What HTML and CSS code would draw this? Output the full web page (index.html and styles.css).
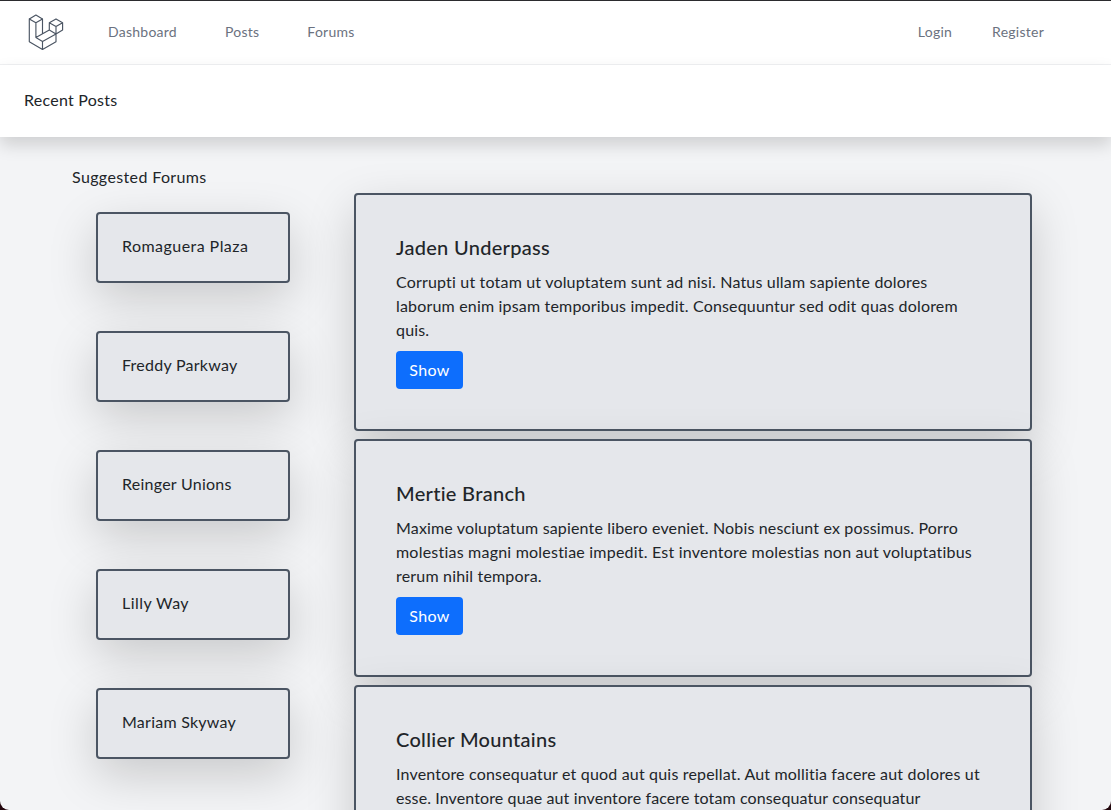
FILE: index.html
```html
<!DOCTYPE html>
<html lang="en">
<head>
<meta charset="utf-8">
<title>Recent Posts</title>
<link rel="stylesheet" href="styles.css">
</head>
<body>
<div class="window">
  <nav class="navbar">
    <a class="logo" href="#" aria-label="Home">
      <svg width="36" height="37" viewBox="0 0 36 37" fill="none" stroke="#4b5563" stroke-width="1.15" stroke-linejoin="round" stroke-linecap="round">
        <path d="M1.3 4.9 7.9 1 14.5 4.9 7.9 8.7ZM1.3 4.9V27.8L14.5 35.4 28 27.8V19.9M7.9 8.7V23.5L14.5 27.4V35.4M14.5 4.9V19.7M7.9 23.5 21.3 15.9M14.5 27.4 28 19.9M28 4.9 34.6 8.7 28 12.5 21.3 8.7ZM21.3 8.7V15.9L28 19.9 34.6 16V8.7M28 12.5V19.9"/>
      </svg>
    </a>
    <div class="links">
      <a href="#">Dashboard</a>
      <a href="#">Posts</a>
      <a href="#">Forums</a>
    </div>
    <div class="auth">
      <a href="#">Login</a>
      <a href="#">Register</a>
    </div>
  </nav>
  <header class="heading">Recent Posts</header>
  <main class="content">
    <aside class="suggested">
      <h2 class="suggested-title">Suggested Forums</h2>
      <div class="forum wide">Romaguera Plaza</div>
      <div class="forum">Freddy Parkway</div>
      <div class="forum">Reinger Unions</div>
      <div class="forum wide">Lilly Way</div>
      <div class="forum">Mariam Skyway</div>
    </aside>
    <section class="posts">
      <article class="post">
        <h3 class="post-title">Jaden Underpass</h3>
        <p class="post-text">Corrupti ut totam ut voluptatem sunt ad nisi. Natus ullam sapiente dolores<br>laborum enim ipsam temporibus impedit. Consequuntur sed odit quas dolorem<br>quis.</p>
        <a class="btn" href="#">Show</a>
      </article>
      <article class="post">
        <h3 class="post-title">Mertie Branch</h3>
        <p class="post-text"><span class="snug">Maxime voluptatum sapiente libero eveniet. Nobis nesciunt ex possimus. Porro</span><br><span class="loose">molestias magni molestiae impedit. Est inventore molestias non aut voluptatibus</span><br>rerum nihil tempora.</p>
        <a class="btn" href="#">Show</a>
      </article>
      <article class="post">
        <h3 class="post-title">Collier Mountains</h3>
        <p class="post-text">Inventore consequatur et quod aut quis repellat. Aut mollitia facere aut dolores ut<br><span class="tight">esse. Inventore quae aut inventore facere totam consequatur consequatur</span></p>
      </article>
    </section>
  </main>
</div>
</body>
</html>
```

FILE: styles.css
```css
* { box-sizing: border-box; }
html { background: #22060c; }
body {
  margin: 0;
  height: 810px;
  overflow: hidden;
  font-family: Lato, sans-serif;
  font-size: 16px;
  line-height: 24px;
  letter-spacing: 0.25px;
  color: #212529;
}
a { text-decoration: none; color: inherit; }
.window {
  height: 810px;
  overflow: hidden;
  background: #f3f4f6;
  border-top: 1px solid #2b2b2e;
  border-radius: 0 0 9px 9px;
}
.navbar {
  display: flex;
  align-items: center;
  height: 64px;
  padding: 0 67px 0 28px;
  background: #fff;
  border-bottom: 1px solid #f0f1f3;
  font-size: 14px;
  color: #6b7280;
}
.logo { display: flex; }
.links { display: flex; gap: 48px; margin-left: 44px; padding-bottom: 1px; }
.auth { display: flex; gap: 40px; margin-left: auto; padding-bottom: 1px; }
.heading {
  height: 72px;
  padding: 23px 24px;
  background: #fff;
  box-shadow: 0 8px 16px rgba(0, 0, 0, 0.15);
}
.content { display: flex; align-items: flex-start; }
.suggested { width: 290px; padding: 28px 0 0 72px; }
.suggested-title {
  margin: 0 0 23px;
  font-size: 16px;
  font-weight: 400;
  line-height: 24px;
  letter-spacing: 0.37px;
}
.forum {
  height: 71px;
  margin: 0 0 48px 24px;
  padding: 20px 24px;
  background: #e5e7eb;
  border: 2px solid #4b5563;
  border-radius: 4px;
  box-shadow: 0 16px 48px rgba(0, 0, 0, 0.175);
}
.wide { letter-spacing: 0.45px; }
.posts {
  display: flex;
  flex-direction: column;
  gap: 8px;
  width: 678px;
  margin: 56px 0 0 64px;
}
.post {
  height: 238px;
  padding: 39px 40px;
  background: #e5e7eb;
  border: 2px solid #4b5563;
  border-radius: 4px;
  box-shadow: 0 16px 48px rgba(0, 0, 0, 0.175);
}
.post-title {
  margin: 0 0 10px;
  font-size: 20px;
  font-weight: 500;
  line-height: 26px;
  letter-spacing: 0.3px;
}
.post-text { margin: 0 0 9px; white-space: nowrap; letter-spacing: 0.18px; }
.snug { letter-spacing: 0.155px; }
.loose { letter-spacing: 0.215px; }
.tight { letter-spacing: 0.11px; }
.btn {
  display: block;
  width: 67px;
  height: 38px;
  border-radius: 4px;
  background: #0d6efd;
  color: #fff;
  line-height: 37px;
  letter-spacing: 0.4px;
  text-align: center;
}
```
